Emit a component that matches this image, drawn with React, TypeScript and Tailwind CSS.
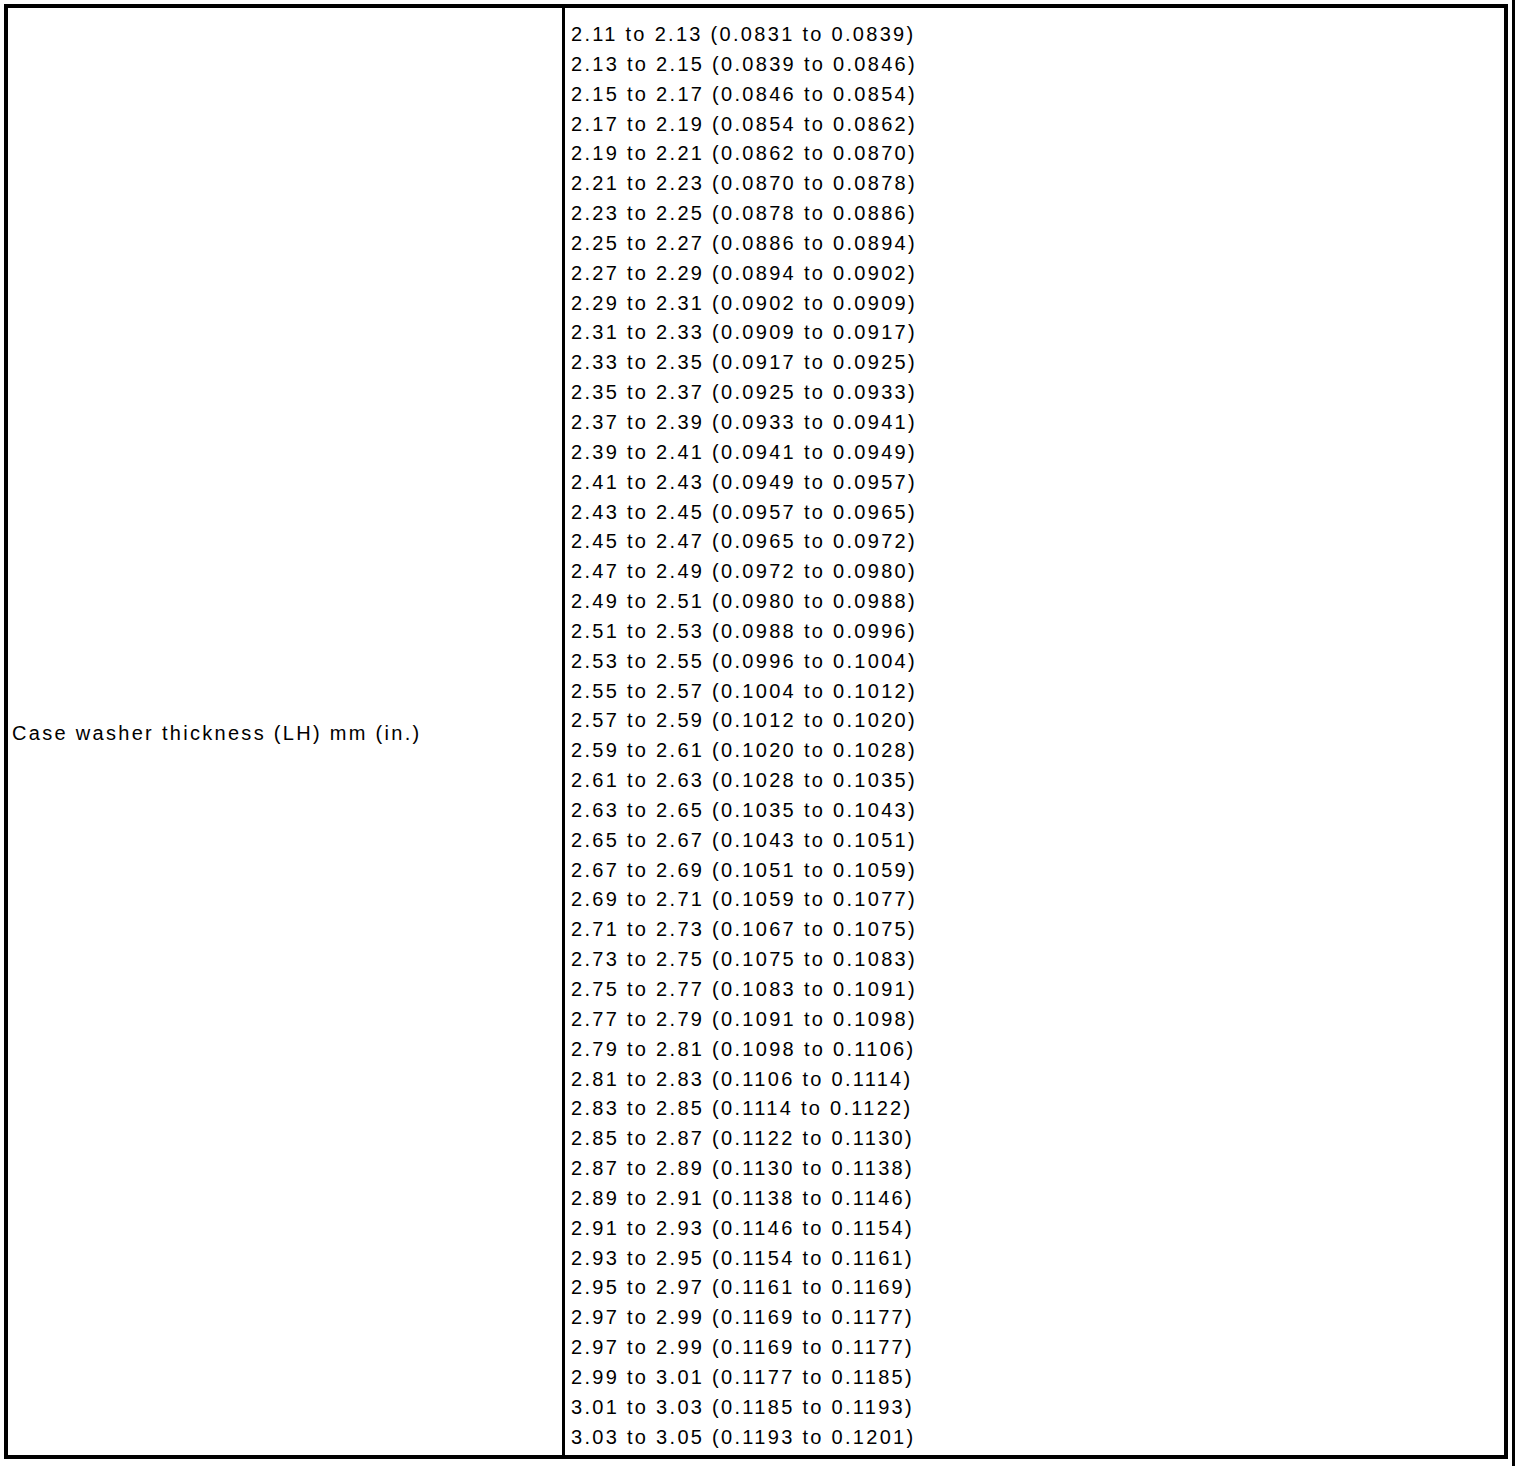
import React from 'react';

const ranges = [
  '2.11 to 2.13 (0.0831 to 0.0839)',
  '2.13 to 2.15 (0.0839 to 0.0846)',
  '2.15 to 2.17 (0.0846 to 0.0854)',
  '2.17 to 2.19 (0.0854 to 0.0862)',
  '2.19 to 2.21 (0.0862 to 0.0870)',
  '2.21 to 2.23 (0.0870 to 0.0878)',
  '2.23 to 2.25 (0.0878 to 0.0886)',
  '2.25 to 2.27 (0.0886 to 0.0894)',
  '2.27 to 2.29 (0.0894 to 0.0902)',
  '2.29 to 2.31 (0.0902 to 0.0909)',
  '2.31 to 2.33 (0.0909 to 0.0917)',
  '2.33 to 2.35 (0.0917 to 0.0925)',
  '2.35 to 2.37 (0.0925 to 0.0933)',
  '2.37 to 2.39 (0.0933 to 0.0941)',
  '2.39 to 2.41 (0.0941 to 0.0949)',
  '2.41 to 2.43 (0.0949 to 0.0957)',
  '2.43 to 2.45 (0.0957 to 0.0965)',
  '2.45 to 2.47 (0.0965 to 0.0972)',
  '2.47 to 2.49 (0.0972 to 0.0980)',
  '2.49 to 2.51 (0.0980 to 0.0988)',
  '2.51 to 2.53 (0.0988 to 0.0996)',
  '2.53 to 2.55 (0.0996 to 0.1004)',
  '2.55 to 2.57 (0.1004 to 0.1012)',
  '2.57 to 2.59 (0.1012 to 0.1020)',
  '2.59 to 2.61 (0.1020 to 0.1028)',
  '2.61 to 2.63 (0.1028 to 0.1035)',
  '2.63 to 2.65 (0.1035 to 0.1043)',
  '2.65 to 2.67 (0.1043 to 0.1051)',
  '2.67 to 2.69 (0.1051 to 0.1059)',
  '2.69 to 2.71 (0.1059 to 0.1077)',
  '2.71 to 2.73 (0.1067 to 0.1075)',
  '2.73 to 2.75 (0.1075 to 0.1083)',
  '2.75 to 2.77 (0.1083 to 0.1091)',
  '2.77 to 2.79 (0.1091 to 0.1098)',
  '2.79 to 2.81 (0.1098 to 0.1106)',
  '2.81 to 2.83 (0.1106 to 0.1114)',
  '2.83 to 2.85 (0.1114 to 0.1122)',
  '2.85 to 2.87 (0.1122 to 0.1130)',
  '2.87 to 2.89 (0.1130 to 0.1138)',
  '2.89 to 2.91 (0.1138 to 0.1146)',
  '2.91 to 2.93 (0.1146 to 0.1154)',
  '2.93 to 2.95 (0.1154 to 0.1161)',
  '2.95 to 2.97 (0.1161 to 0.1169)',
  '2.97 to 2.99 (0.1169 to 0.1177)',
  '2.97 to 2.99 (0.1169 to 0.1177)',
  '2.99 to 3.01 (0.1177 to 0.1185)',
  '3.01 to 3.03 (0.1185 to 0.1193)',
  '3.03 to 3.05 (0.1193 to 0.1201)',
];

const App = () => {
  return (
    <div className="flex h-[1466px] w-[1520px] bg-white text-black font-['Liberation_Sans',Arial,sans-serif] text-[20px] tracking-[2.3px]">
      <div className="pl-[4px] pt-[4px]">
        <div className="flex h-[1455px] w-[1504px] border-4 border-black">
          <div className="flex w-[554px] items-center pl-[4px] pt-[2px]">
            Case washer thickness (LH) mm (in.)
          </div>
          <div className="flex-1 border-l-[3px] border-black pl-[6px] pt-[12px]">
            {ranges.map((r, i) => (
              <div key={i} className="leading-[29.85px] whitespace-nowrap">
                {r}
              </div>
            ))}
          </div>
        </div>
      </div>
      <div className="ml-[4px] h-full w-[3px] bg-black" />
    </div>
  );
};

export default App;
